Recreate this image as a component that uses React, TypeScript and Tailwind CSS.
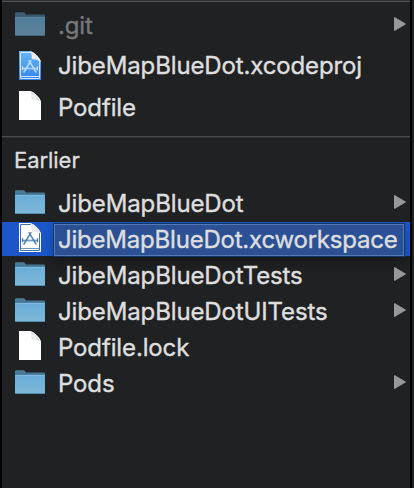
import React from "react";

type Kind = "folder" | "project" | "workspace" | "file";

function Folder({ dim, id }: { dim?: boolean; id: string }) {
  return (
    <svg width="30" height="26" viewBox="0 0 30 26" className={dim ? "mt-1 opacity-65" : "mt-1"}>
      <defs>
        <linearGradient id={id} x1="0" y1="0" x2="0" y2="1">
          <stop offset="0" stopColor="#69acd8" />
          <stop offset="1" stopColor="#7fb8d8" />
        </linearGradient>
      </defs>
      <path d="M0 7V1.500Q0 .3 1.200 .3H8.500q1 0 1.500.9l1 1.300H28.800Q30 2.500 30 3.700V7z" fill="#4b7c9b" />
      <path d="M0 4.500H30V22.500Q30 24 28.500 24H1.500Q0 24 0 22.500z" fill={"url(#" + id + ")"} />
      <path d="M0 4H30" stroke="#3f6c87" strokeWidth="1" />
      <path d="M.5 5.500H29.500" stroke="#7dbade" strokeWidth="1" />
      <path d="M.8 23.500H29.200" stroke="#548eb0" strokeWidth="1" />
    </svg>
  );
}

function Doc({ kind, id }: { kind: Kind; id: string }) {
  const blue = kind === "project";
  const ink = blue ? "#cfe7fc" : "#3c74ae";
  return (
    <svg width="24" height="31" viewBox="0 0 24 31" className="ml-[3px] mt-px">
      <defs>
        <linearGradient id={"doc-" + id} x1="0" y1="0" x2="0" y2="1">
          <stop offset="0" stopColor={blue ? "#68b8f5" : "#fff"} />
          <stop offset="1" stopColor={blue ? "#3482ed" : "#fff"} />
        </linearGradient>
        <linearGradient id={"fold-" + id} x1="0" y1="1" x2="1" y2="0">
          <stop offset=".2" stopColor="#fff" />
          <stop offset=".6" stopColor="#e4e4e4" />
          <stop offset="1" stopColor="#aaa" />
        </linearGradient>
      </defs>
      <path d="M1 0H12Q15 .5 18.500 4Q22.500 8 23 11V29H1z" fill={"url(#doc-" + id + ")"} />
      {kind !== "file" && (
        <g fill="none" stroke={ink} strokeWidth="1">
          <path d="M13.500 1.500H2.500V27.500H21.500V9" />
          <path d="M3 25.500H21" opacity={blue ? 1 : 0.75} />
          <path d="M12.800 9.800L6 21M11.200 9.800L18 21" strokeWidth="1.600" strokeLinecap="round" opacity=".85" />
          <path d="M4.500 17.500H19.500" strokeWidth="1.700" opacity=".7" />
          <path d="M4.500 15.300V19.200M19.500 15.300V19.200" strokeWidth="1.200" />
        </g>
      )}
      <path d="M12 0Q14 3 14 8Q19 8 23 11Q22.500 8 18.500 4Q15 .5 12 0z" fill={"url(#fold-" + id + ")"} />
      <path d="M14 2.500V7.800H19.500" fill="none" stroke="#cfcfcf" strokeWidth=".6" />
    </svg>
  );
}

interface RowProps {
  name: string;
  kind: Kind;
  id: string;
  height?: string;
  textTop?: string;
  dim?: boolean;
  selected?: boolean;
}

const label = "whitespace-nowrap text-[24px] leading-[30px] [-webkit-text-stroke:0.4px]";

function Row({ name, kind, id, height = "h-9", textTop = "pt-[3px]", dim, selected }: RowProps) {
  return (
    <div className={"flex shrink-0 items-start " + height}>
      <div className={"flex w-full items-start pl-[13px] " + (selected ? "h-[34px] bg-[#1b57c8]" : "h-full")}>
        <div className="w-[38px] shrink-0">
          {kind === "folder" ? <Folder dim={dim} id={id} /> : <Doc kind={kind} id={id} />}
        </div>
        {selected ? (
          <div className={"ml-px mt-[2px] h-8 w-[350px] shrink-0 border border-[#5479b5] bg-[#2b5194] pl-[3px] tracking-[-0.21px] outline outline-1 outline-[#153468] shadow-[0_6px_12px_rgba(0,0,0,0.3)] " + label}>
            {name}
          </div>
        ) : (
          <div className={"flex-1 pl-[5px] tracking-[-0.13px] " + label + " " + textTop + (dim ? " text-[#77787a]" : "")}>
            {name}
          </div>
        )}
        {kind === "folder" && (
          <svg width="12" height="14" viewBox="0 0 12 14" className="mr-1 mt-[9px] shrink-0">
            <path d="M.5 .5L11.500 7L.5 13.500z" fill="#989898" stroke="#989898" strokeLinejoin="round" />
          </svg>
        )}
      </div>
    </div>
  );
}

export default function App() {
  return (
    <div className="flex h-[488px] w-[414px] overflow-hidden bg-black pl-[2px] font-['Inter',sans-serif] text-[#dededf]">
      <div className="flex w-[408px] flex-col bg-[#202123]">
        <div className="mb-1.5 h-0.5 shrink-0 border-b border-[#505153] bg-[#303133]" />
        <Row name=".git" kind="folder" id="f-git" height="h-[42px]" dim />
        <Row name="JibeMapBlueDot.xcodeproj" kind="project" id="p" height="h-10" textTop="pt-px" />
        <Row name="Podfile" kind="file" id="pod" height="h-[46px]" />
        <div className="h-0.5 shrink-0 border-t border-[#48494b] bg-[#303133]" />
        <div className="h-12 shrink-0 pl-3 pt-2 text-[22px] leading-[28px] tracking-[-0.05px] [-webkit-text-stroke:0.35px]">Earlier</div>
        <Row name="JibeMapBlueDot" kind="folder" id="f-map" />
        <Row name="JibeMapBlueDot.xcworkspace" kind="workspace" id="w" selected />
        <Row name="JibeMapBlueDotTests" kind="folder" id="f-tests" />
        <Row name="JibeMapBlueDotUITests" kind="folder" id="f-ui" />
        <Row name="Podfile.lock" kind="file" id="lock" />
        <Row name="Pods" kind="folder" id="f-pods" />
      </div>
      <div className="ml-[2px] w-[2px] bg-[#202123]" />
    </div>
  );
}
